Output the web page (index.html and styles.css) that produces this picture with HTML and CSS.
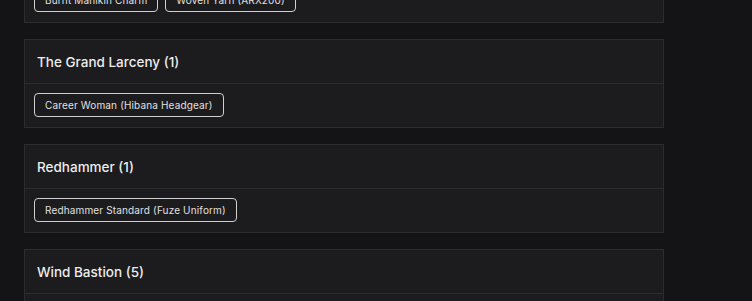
FILE: index.html
```html
<!DOCTYPE html>
<html>
<head>
<meta charset="utf-8">
<link rel="stylesheet" href="styles.css">
</head>
<body>
<main class="list">
  <section class="card first">
    <header class="card-head">Operation Shadow Legacy (2)</header>
    <div class="card-body">
      <span class="tag">Burnt Manikin Charm</span>
      <span class="tag">Woven Yarn (ARX200)</span>
    </div>
  </section>
  <section class="card">
    <header class="card-head">The Grand Larceny (1)</header>
    <div class="card-body">
      <span class="tag">Career Woman (Hibana Headgear)</span>
    </div>
  </section>
  <section class="card">
    <header class="card-head">Redhammer (1)</header>
    <div class="card-body">
      <span class="tag">Redhammer Standard (Fuze Uniform)</span>
    </div>
  </section>
  <section class="card">
    <header class="card-head">Wind Bastion (5)</header>
    <div class="card-body">
      <span class="tag">Placeholder</span>
    </div>
  </section>
</main>
</body>
</html>
```
FILE: styles.css
```css
html, body {
  margin: 0;
  padding: 0;
  background: #141316;
  height: 100%;
  overflow: hidden;
}
body {
  font-family: "Inter", "Open Sans", sans-serif;
  color: #e6e6e6;
}
.list {
  width: 640px;
  padding-left: 24px;
  display: flex;
  flex-direction: column;
  gap: 16px;
}
.card {
  background: #1c1b1e;
  border: 1px solid #2c2b2e;
}
.card.first {
  margin-top: -66px;
}
.card-head {
  height: 43px;
  padding: 0 12px;
  display: flex;
  align-items: center;
  font-size: 13.5px;
  font-weight: 500;
  color: #ececec;
  border-bottom: 1px solid #2c2b2e;
}
.card-body {
  display: flex;
  flex-wrap: wrap;
  gap: 7px;
  padding: 9px 9px 10px;
}
.tag {
  box-sizing: border-box;
  height: 24px;
  padding: 0 10px;
  display: inline-flex;
  align-items: center;
  font-size: 10px;
  letter-spacing: 0.15px;
  color: #e0e0e0;
  border: 1px solid #cfcfcf;
  border-radius: 4px;
}
```
